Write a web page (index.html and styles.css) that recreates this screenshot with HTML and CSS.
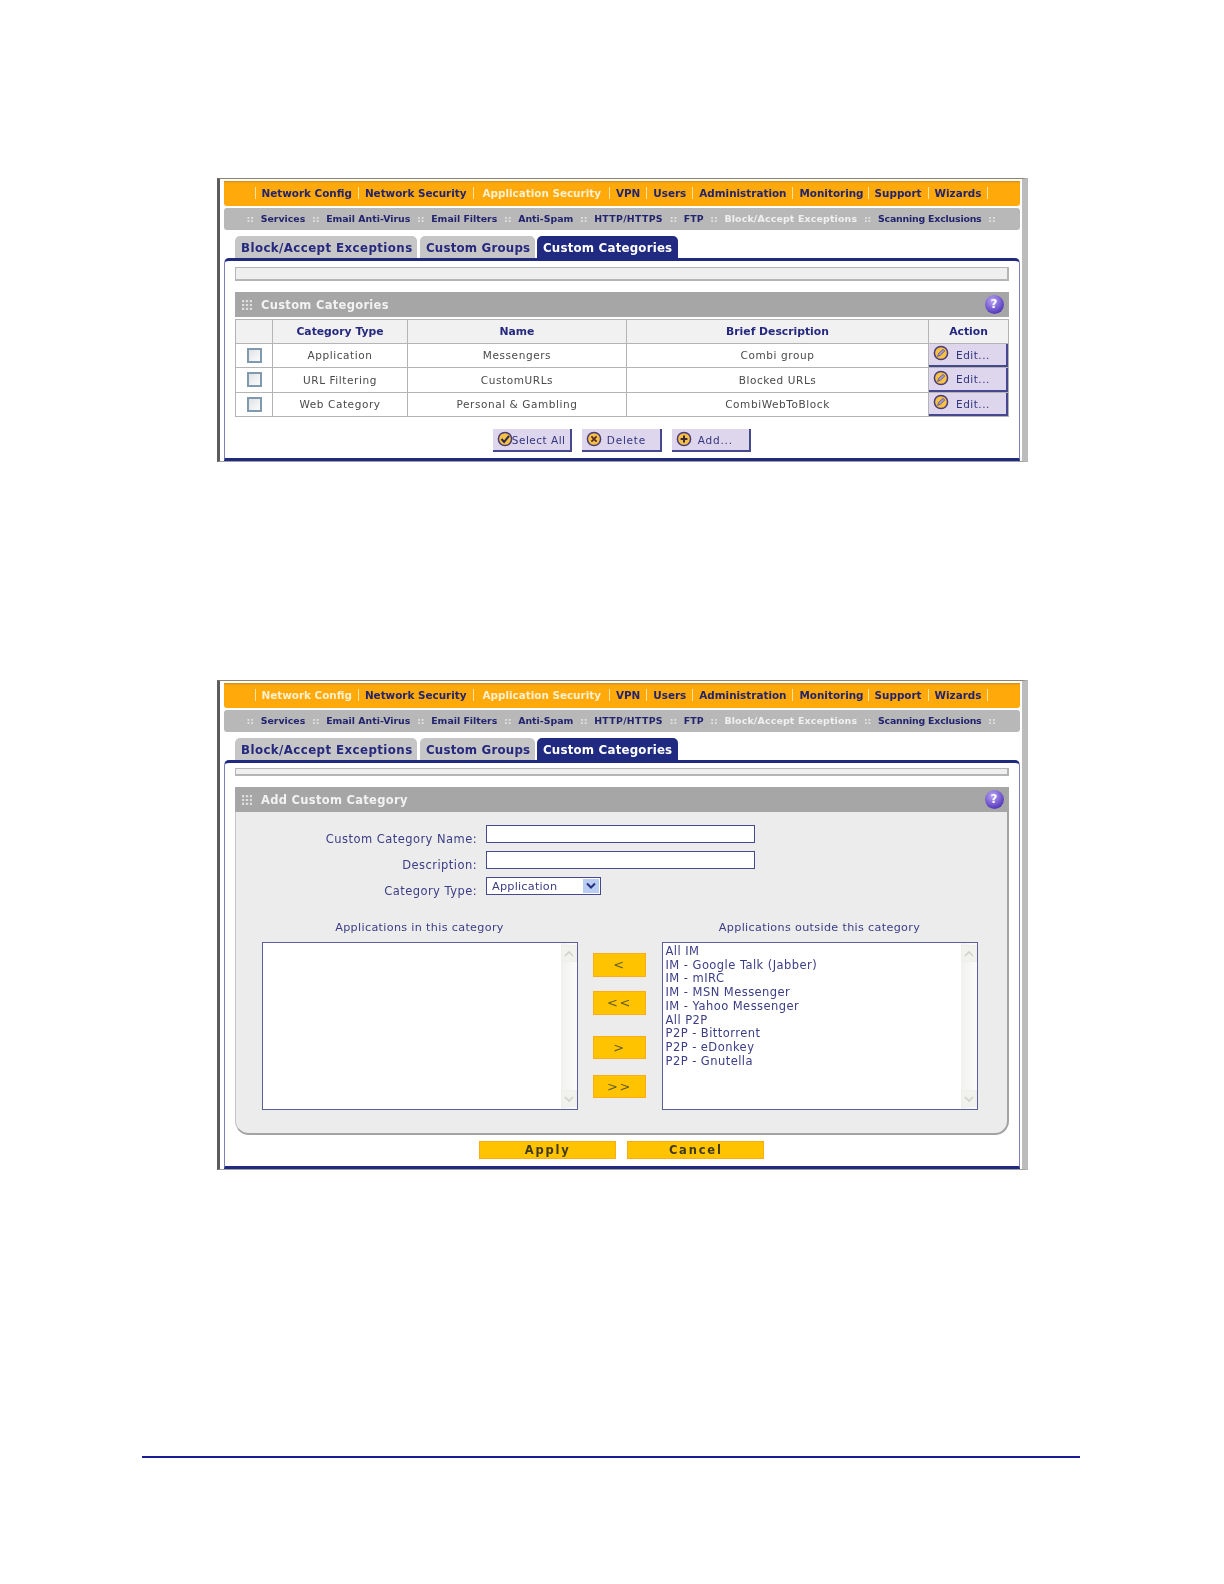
FILE: index.html
```html
<!DOCTYPE html>
<html lang="en">
<head>
<meta charset="utf-8">
<title>Custom Categories</title>
<link rel="stylesheet" href="styles.css">
</head>
<body>
<svg class="defs" width="0" height="0" aria-hidden="true">
  <symbol id="i-check" viewBox="0 0 16 16"><circle cx="8" cy="8" r="6.6" fill="#f6c244" stroke="#4a3a78" stroke-width="1.5"/><path d="M4.5 8l2.6 3L12 4.8" fill="none" stroke="#2a2450" stroke-width="2"/></symbol>
  <symbol id="i-x" viewBox="0 0 16 16"><circle cx="8" cy="8" r="6.6" fill="#f6c244" stroke="#4a3a78" stroke-width="1.5"/><path d="M5.4 5.4l5.2 5.2M10.6 5.4l-5.2 5.2" fill="none" stroke="#5a2a30" stroke-width="1.8"/></symbol>
  <symbol id="i-plus" viewBox="0 0 16 16"><circle cx="8" cy="8" r="6.6" fill="#f6c244" stroke="#4a3a78" stroke-width="1.5"/><path d="M8 4.6v6.8M4.6 8h6.8" fill="none" stroke="#3a2440" stroke-width="2"/></symbol>
  <symbol id="i-edit" viewBox="0 0 16 16"><circle cx="8" cy="8" r="6.6" fill="#f6c244" stroke="#4a3a78" stroke-width="1.5"/><path d="M4.6 11.4l1-3L10 4.4l1.8 1.6-4.4 4.2z" fill="#a99ad6" stroke="#5a4a86" stroke-width=".8"/></symbol>
  <symbol id="i-grip" viewBox="0 0 9 9"><path d="M0 0h2v2H0zM3.500 0h2v2h-2zM7 0h2v2H7zM0 3.500h2v2H0zM3.500 3.500h2v2h-2zM7 3.500h2v2H7zM0 7h2v2H0zM3.500 7h2v2h-2zM7 7h2v2H7z" fill="#dedede"/></symbol>
  <symbol id="i-up" viewBox="0 0 10 8"><path d="M1 6l4-4 4 4" fill="none" stroke="#cfd2cf" stroke-width="1.6"/></symbol>
  <symbol id="i-down" viewBox="0 0 10 8"><path d="M1 2l4 4 4-4" fill="none" stroke="#cfd2cf" stroke-width="1.6"/></symbol>
  <symbol id="i-select" viewBox="0 0 10 8"><path d="M1 1.500l4 4 4-4" fill="none" stroke="#27307e" stroke-width="2"/></symbol>
</svg>

<section class="figure figure-list">
  <nav class="mainnav">
    <a>Network Config</a><a>Network Security</a><a class="on">Application Security</a><a>VPN</a><a>Users</a><a>Administration</a><a>Monitoring</a><a>Support</a><a>Wizards</a>
  </nav>
  <nav class="subnav">
    <i>::</i><a>Services</a><i>::</i><a>Email Anti-Virus</a><i>::</i><a>Email Filters</a><i>::</i><a>Anti-Spam</a><i>::</i><a class="wide">HTTP/HTTPS</a><i>::</i><a>FTP</a><i>::</i><a class="on">Block/Accept Exceptions</a><i>::</i><a class="tight">Scanning Exclusions</a><i>::</i>
  </nav>
  <div class="tabs">
    <a class="tab tab-a">Block/Accept Exceptions</a><a class="tab tab-b">Custom Groups</a><a class="tab tab-c on">Custom Categories</a>
  </div>
  <div class="panel">
    <div class="msgbar"></div>
    <header class="sect">
      <svg class="grip"><use href="#i-grip"/></svg><span>Custom Categories</span><b class="help">?</b>
    </header>
    <table class="grid">
      <colgroup><col class="c1"><col class="c2"><col class="c3"><col class="c4"><col class="c5"></colgroup>
      <thead><tr><th></th><th>Category Type</th><th>Name</th><th>Brief Description</th><th>Action</th></tr></thead>
      <tbody>
        <tr><td><span class="check"></span></td><td>Application</td><td>Messengers</td><td>Combi group</td><td class="act"><a class="edit"><svg class="ico"><use href="#i-edit"/></svg><span>Edit...</span></a></td></tr>
        <tr><td><span class="check"></span></td><td>URL Filtering</td><td>CustomURLs</td><td>Blocked URLs</td><td class="act"><a class="edit"><svg class="ico"><use href="#i-edit"/></svg><span>Edit...</span></a></td></tr>
        <tr><td><span class="check"></span></td><td>Web Category</td><td>Personal &amp; Gambling</td><td>CombiWebToBlock</td><td class="act"><a class="edit"><svg class="ico"><use href="#i-edit"/></svg><span>Edit...</span></a></td></tr>
      </tbody>
    </table>
    <div class="actions">
      <a class="btn btn-sel"><svg class="ico"><use href="#i-check"/></svg><span>Select All</span></a>
      <a class="btn btn-del"><svg class="ico"><use href="#i-x"/></svg><span>Delete</span></a>
      <a class="btn btn-add"><svg class="ico"><use href="#i-plus"/></svg><span>Add...</span></a>
    </div>
  </div>
</section>

<section class="figure figure-add">
  <nav class="mainnav">
    <a class="on">Network Config</a><a>Network Security</a><a class="on">Application Security</a><a>VPN</a><a>Users</a><a>Administration</a><a>Monitoring</a><a>Support</a><a>Wizards</a>
  </nav>
  <nav class="subnav">
    <i>::</i><a>Services</a><i>::</i><a>Email Anti-Virus</a><i>::</i><a>Email Filters</a><i>::</i><a>Anti-Spam</a><i>::</i><a class="wide">HTTP/HTTPS</a><i>::</i><a>FTP</a><i>::</i><a class="on">Block/Accept Exceptions</a><i>::</i><a class="tight">Scanning Exclusions</a><i>::</i>
  </nav>
  <div class="tabs">
    <a class="tab tab-a">Block/Accept Exceptions</a><a class="tab tab-b">Custom Groups</a><a class="tab tab-c on">Custom Categories</a>
  </div>
  <div class="panel">
    <div class="msgbar thin"></div>
    <header class="sect">
      <svg class="grip"><use href="#i-grip"/></svg><span>Add Custom Category</span><b class="help">?</b>
    </header>
    <div class="formbox">
      <div class="row"><label>Custom Category Name:</label><input class="text" type="text"></div>
      <div class="row"><label>Description:</label><input class="text" type="text"></div>
      <div class="row"><label>Category Type:</label><div class="select"><span>Application</span><em><svg><use href="#i-select"/></svg></em></div></div>
      <div class="transfer">
        <h4>Applications in this category</h4>
        <span></span>
        <h4>Applications outside this category</h4>
        <div class="listbox">
          <div class="items"></div>
          <div class="scroll"><s><svg><use href="#i-up"/></svg></s><s><svg><use href="#i-down"/></svg></s></div>
        </div>
        <div class="movers">
          <a class="mv">&lt;</a><a class="mv mv2">&lt;&lt;</a><a class="mv mv3">&gt;</a><a class="mv mv4">&gt;&gt;</a>
        </div>
        <div class="listbox">
          <div class="items">
            <div>All IM</div><div>IM - Google Talk (Jabber)</div><div>IM - mIRC</div><div>IM - MSN Messenger</div><div>IM - Yahoo Messenger</div><div>All P2P</div><div>P2P - Bittorrent</div><div>P2P - eDonkey</div><div>P2P - Gnutella</div>
          </div>
          <div class="scroll"><s><svg><use href="#i-up"/></svg></s><s><svg><use href="#i-down"/></svg></s></div>
        </div>
      </div>
    </div>
    <div class="submit"><a class="go">Apply</a><a class="go">Cancel</a></div>
  </div>
</section>

<hr class="rule">
</body>
</html>
```

FILE: styles.css
```css
* { box-sizing: border-box; }
html, body { margin: 0; background: #fff; }
body { padding-top: 178px; height: 1584px; overflow: hidden; font-family: "DejaVu Sans", Verdana, sans-serif; }
a { display: block; }
.defs { position: absolute; }

.figure {
  width: 811px;
  margin-left: 217px;
  padding: 2px 2px 2px 4px;
  background: #fff;
  border-left: 3px solid #5c5c5c;
  border-right: 6px solid #bcbcbc;
  border-top: 1px solid #8d8170;
  border-bottom: 1px solid #a0a0a0;
  filter: blur(.45px);
}
.figure-list { height: 284px; }
.figure-add { height: 490px; margin-top: 218px; }

.mainnav {
  display: flex;
  height: 25px;
  align-items: center;
  padding: 0 0 1px 30.500px;
  background: #ffa90b;
  border-radius: 0 0 3px 3px;
  box-shadow: inset 0 2px 2px -1px #c98a1c;
}
.mainnav a {
  padding: 0 6px;
  border-right: 1px solid #ffe2a6;
  line-height: 12px;
  font-size: 10.400px;
  font-weight: 700;
  color: #23246e;
  white-space: nowrap;
}
.mainnav a:first-child { border-left: 1px solid #ffe2a6; }
.mainnav a.on { color: #fff0cf; }
.mainnav a:nth-child(3) { padding: 0 8px 0 9px; }
.mainnav a:nth-child(7) { padding-right: 4px; }

.subnav {
  display: flex;
  align-items: center;
  height: 22px;
  margin-top: 2px;
  padding: 0 0 2px 22.500px;
  gap: 6.700px;
  background: #b8b8b8;
  border-radius: 3px;
  font-size: 9.400px;
  font-weight: 700;
  color: #23246e;
  white-space: nowrap;
}
.subnav i { font-style: normal; color: #e4e4e4; }
.subnav a.on { color: #f0f0f0; letter-spacing: .18px; }
.subnav a.tight { letter-spacing: -.2px; }
.subnav a.wide { letter-spacing: .32px; }

.tabs {
  display: flex;
  height: 22px;
  margin: 6px 0 0 11px;
  font-size: 11.800px;
  font-weight: 700;
  letter-spacing: .2px;
  white-space: nowrap;
}
.tab {
  padding: 5px 0 0 6px;
  background: #c6c6c6;
  color: #25287e;
  border-radius: 5px 5px 0 0;
}
.tab-a { width: 182px; letter-spacing: .42px; }
.tab-b { width: 115px; margin-left: 3px; }
.tab-c { width: 141px; margin-left: 2px; }
.tab.on { background: #1f2a80; color: #fff; }

.panel {
  height: 203px;
  padding: 6px 10.500px 0 10px;
  border: 1px solid #7d80bd;
  border-top: 3px solid #1f2a80;
  border-bottom: 3px solid #1f2a80;
  border-radius: 5px 5px 0 0;
  background: #fff;
}
.figure-add .panel { height: 409px; padding-top: 5px; }
.msgbar { height: 14px; background: #efefef; border: 1px solid #b5b5b5; border-right-width: 2px; border-bottom-width: 2px; }
.msgbar.thin { height: 8px; }

.sect {
  display: flex;
  align-items: center;
  height: 25px;
  margin-top: 11px;
  padding: 0 5px 0 7px;
  background: #a6a6a6;
  color: #f2f2f2;
  font-size: 11.500px;
  font-weight: 700;
  letter-spacing: .3px;
}
.grip { width: 10px; height: 10px; margin-right: 9px; }
.help {
  width: 19px;
  height: 19px;
  margin-left: auto;
  border-radius: 50%;
  background: radial-gradient(circle at 40% 30%, #b9a5f5, #5b3fc0 70%, #3c2a92);
  color: #fff;
  font-size: 12px;
  line-height: 19px;
  text-align: center;
  letter-spacing: 0;
}

.grid {
  width: 773px;
  height: 95px;
  margin-top: 2px;
  table-layout: fixed;
  border-collapse: collapse;
  font-size: 10.500px;
  letter-spacing: .58px;
  color: #4a4a4a;
  text-align: center;
}
.c1 { width: 37px; }
.c2 { width: 135px; }
.c3 { width: 219px; }
.c4 { width: 302px; }
.c5 { width: 80px; }
.grid th, .grid td { padding: 0; height: 23.500px; border: 1.500px solid #b4b4b4; }
.grid th { background: #f1f1f1; color: #25287e; font-weight: 700; letter-spacing: 0; font-size: 10.800px; }
.check {
  display: block;
  width: 15px;
  height: 15px;
  margin: 0 auto;
  border: 2px solid #7f9aae;
  background: linear-gradient(135deg, #dfe3e6, #fbfbfb);
}
.edit {
  display: flex;
  align-items: center;
  height: 23.500px;
  padding: 1px 0 0 4px;
  background: #ddd6ec;
  border-right: 2px solid #45478f;
  border-bottom: 2px solid #45478f;
  color: #33357f;
  font-size: 10.500px;
  letter-spacing: .5px;
}
.ico { width: 16px; height: 16px; flex: none; margin-top: -3px; }
.edit span { margin-left: 7px; }

.actions { display: flex; justify-content: center; gap: 10px; margin-top: 12px; }
.btn {
  display: flex;
  align-items: center;
  height: 23px;
  padding: 1px 0 0 4px;
  background: #ddd6ec;
  border-right: 2px solid #45478f;
  border-bottom: 2px solid #45478f;
  color: #33357f;
  font-size: 10.500px;
  letter-spacing: .8px;
  white-space: nowrap;
}
.btn-sel { width: 79px; }
.btn-sel span { margin-left: -1px; letter-spacing: .5px; }
.btn-del { width: 80px; }
.btn-del span { margin-left: 5px; }
.btn-add { width: 79px; }
.btn-add span { margin-left: 6px; }

.formbox {
  height: 323px;
  padding-top: 13px;
  background: #ececec;
  border-left: 1px solid #c4c4c4;
  border-right: 2px solid #a3a3a3;
  border-bottom: 2px solid #a3a3a3;
  border-radius: 0 0 14px 14px;
  color: #3b3d85;
  font-size: 11.500px;
  letter-spacing: .45px;
}
.row { display: flex; align-items: flex-start; height: 18px; margin-bottom: 8px; }
.row label { width: 241px; margin-right: 9px; padding-top: 5px; line-height: 18px; text-align: right; }
.text { width: 269px; height: 18px; margin: 0; padding: 0; background: #fff; border: 1.500px solid #47498f; border-radius: 0; }
.select {
  display: flex;
  align-items: center;
  justify-content: space-between;
  width: 115px;
  height: 18px;
  padding: 0 1px 0 5px;
  background: #fff;
  border: 1.500px solid #47498f;
  letter-spacing: .2px;
  font-size: 11.300px;
}
.select em { display: flex; align-items: center; justify-content: center; width: 16px; height: 14px; background: #b9cdf2; }
.select svg { width: 10px; height: 8px; }

.transfer {
  display: grid;
  grid-template-columns: 316px 53px 316px;
  column-gap: 15.500px;
  margin: 26px 0 0 25.500px;
}
.transfer h4 { margin: 0; height: 21px; font-size: 11.200px; font-weight: 400; letter-spacing: .33px; text-align: center; line-height: 14px; }
.listbox {
  display: flex;
  justify-content: space-between;
  height: 168px;
  background: #fff;
  border: 1.500px solid #5c5e9e;
}
.items { padding: 2px 0 0 3px; font-size: 11.500px; letter-spacing: .45px; line-height: 13.700px; white-space: nowrap; }
.scroll {
  display: flex;
  flex-direction: column;
  justify-content: space-between;
  width: 16px;
  padding: 2px 0;
  background: linear-gradient(90deg, #f1f2ef, #fbfbfb);
}
.scroll s { display: flex; align-items: center; justify-content: center; height: 17px; background: #f1f1ee; border: 1px solid #eeeeea; }
.scroll svg { width: 10px; height: 8px; }

.movers { padding-top: 11px; }
.mv, .go {
  background: #ffc300;
  border: 1px solid #ffab14;
  text-align: center;
}
.mv { height: 23.500px; line-height: 21px; font-size: 13px; letter-spacing: 1.500px; color: #5e5a2c; }
.mv2 { margin-top: 14.500px; }
.mv3 { margin-top: 21px; }
.mv4 { margin-top: 15.500px; }

.submit { display: flex; justify-content: center; gap: 11px; margin-top: 6px; }
.go { width: 137px; height: 17.500px; line-height: 16px; font-size: 11.500px; font-weight: 700; letter-spacing: 1.800px; color: #3f3a1c; }

.rule { height: 1.500px; width: 938px; margin: 286px 0 0 142px; padding: 0; border: 0; background: #1b1b96; }
```
